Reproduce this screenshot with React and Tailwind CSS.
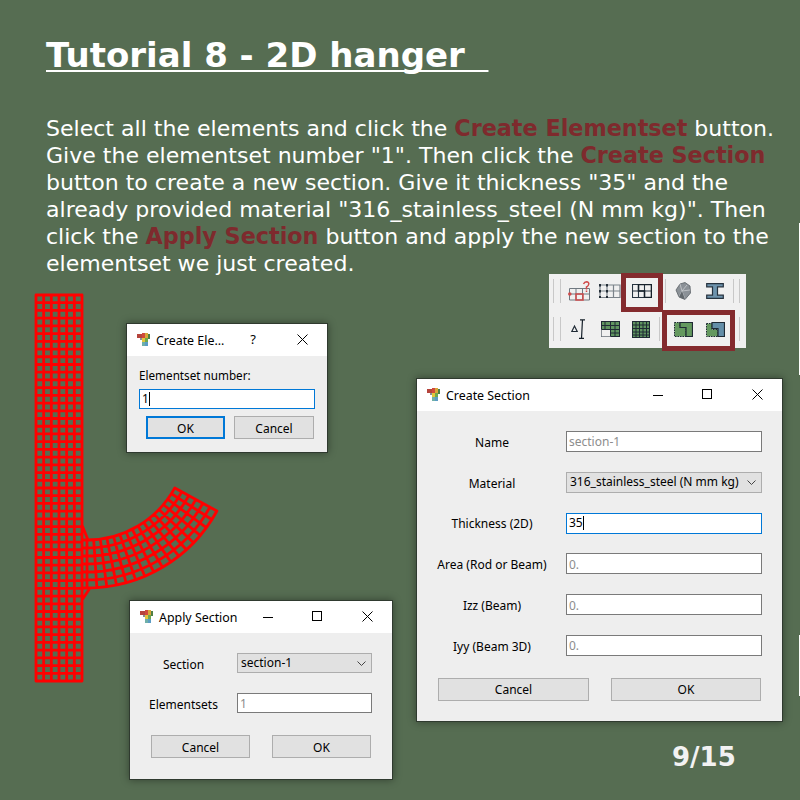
const accent = "text-[#7e2a2d] text-[22.3px]";

// strip + curved arm of the hanger, generated instead of typed out
const meshPath = () => {
  let d = "";
  const left = 36, right = 82, top = 295, bottom = 681;
  for (let c = 0; c <= 6; c++) {
    const x = left + ((right - left) * c) / 6;
    d += `M${x} ${top}V${bottom}`;
  }
  for (let r = 0; r <= 50; r++) {
    const y = top + ((bottom - top) * r) / 50;
    d += `M${left} ${y}H${right}`;
  }
  const cx = 87, cy = 440;
  const start = Math.PI / 2, end = 0.5;
  const pt = (rad, a) => `${(cx + rad * Math.cos(a)).toFixed(1)} ${(cy + rad * Math.sin(a)).toFixed(1)}`;
  for (let r = 0; r <= 6; r++) {
    const rad = 100 + r * 8;
    d += `M${pt(rad, start)}A${rad} ${rad} 0 0 0 ${pt(rad, end)}`;
    d += `M82 ${(cy + rad).toFixed(1)}H87`;
  }
  for (let s = 0; s <= 16; s++) {
    const a = start + ((end - start) * s) / 16;
    d += `M${pt(100, a)}L${pt(148, a)}`;
  }
  d += "M82 525L88 540M82 600L90 588";
  return d;
};

const AppIcon = () => (
  <svg width="13" height="14" viewBox="0 0 13 14" className="shrink-0">
    <rect x="0" y="1" width="5" height="4" fill="#b5443c" />
    <rect x="5" y="0" width="3" height="5" fill="#cf4a3c" />
    <rect x="8" y="0" width="3" height="5" fill="#d9a63a" />
    <rect x="11" y="1" width="2" height="5" fill="#4f7f45" />
    <rect x="3" y="5" width="2" height="2" fill="#8a8f96" />
    <rect x="5" y="5" width="3" height="4" fill="#e3c63c" />
    <rect x="8" y="5" width="3" height="4" fill="#6fa84f" />
    <rect x="5" y="9" width="3" height="4" fill="#6fb0a8" />
    <rect x="8" y="9" width="3" height="4" fill="#5b9cc4" />
  </svg>
);

const CloseGlyph = () => (
  <svg width="11" height="11" viewBox="0 0 11 11" className="mb-[2px] mr-[19px] shrink-0">
    <path d="M0.5 0.5L10.5 10.5M10.5 0.5L0.5 10.5" stroke="#000000" strokeWidth="1" />
  </svg>
);

const TitleBar = ({ title, help }) => (
  <div className="flex h-8 shrink-0 items-center bg-white pl-[10px] text-black">
    <AppIcon />
    <span className="ml-[6px] pt-[2px] text-[12.4px]">{title}</span>
    <div className="flex-1" />
    {help ? (
      <>
        <span className="mr-[41px] text-[13px]">?</span>
        <CloseGlyph />
      </>
    ) : (
      <>
        <div className="mr-[39px] h-px w-[10px] bg-black" />
        <div className="mb-[2px] mr-[40px] h-[10px] w-[10px] border border-black" />
        <CloseGlyph />
      </>
    )}
  </div>
);

const Btn = ({ children, className = "border border-[#adadad]" }) => (
  <div className={`flex h-[23px] w-full items-center justify-center bg-[#e1e1e1] pt-[2px] text-xs text-black ${className}`}>
    {children}
  </div>
);

const Field = ({ children, focus, muted }) => (
  <div
    className={`flex h-[21px] w-[196px] items-center border bg-white pl-[2px] text-xs ${
      focus ? "border-[#0078d7]" : "border-[#7a7a7a]"
    } ${muted ? "pt-[2px] text-[#8d8d8d]" : "text-black"}`}
  >
    {children}
    {focus && <span className="h-[14px] w-px bg-black" />}
  </div>
);

const Chevron = () => (
  <svg width="9" height="5" viewBox="0 0 9 5" className="mr-[5px] shrink-0">
    <path d="M0.5 0.5L4.5 4.5L8.5 0.5" fill="none" stroke="#444444" strokeWidth="1" />
  </svg>
);

const Combo = ({ children, className = "" }) => (
  <div className={`flex items-center justify-between border border-[#adadad] bg-[#e1e1e1] pl-[3px] text-xs text-black ${className}`}>
    <span>{children}</span>
    <Chevron />
  </div>
);

const Row = ({ label, children }) => (
  <div className="flex h-[20.8px] items-center">
    <span className="w-[149px] pl-[1px] pt-[3px] text-center text-xs text-black">{label}</span>
    {children}
  </div>
);

const Sep = ({ className }) => <div className={`h-6 w-px shrink-0 bg-[#c8c8c8] ${className}`} />;

const Toolbar = () => (
  <div className="absolute left-[549px] top-[274px] flex h-[74px] w-[197px] flex-col gap-[14px] bg-[#f0f0f0] pt-[5px]">
    <div className="flex h-6 items-center">
      <Sep className="ml-[4px]" />
      <Sep className="ml-[6px]" />
      <svg className="ml-[7px] shrink-0" width="22" height="20" viewBox="0 0 22 20">
        <path d="M1.5 7.5H21.5V19H1.5ZM8 7.5V19M14.5 7.5V19M1.5 13H21.5" fill="none" stroke="#6f7880" strokeWidth="1" />
        <rect x="8" y="13" width="7" height="6" fill="none" stroke="#cf4a4a" strokeWidth="1.5" />
        <circle cx="1.8" cy="13" r="1.8" fill="#cf4a4a" />
        <path d="M15.5 3Q16.5 0.8 18.5 0.8Q21 1 20.8 3Q20.5 5 18.5 6V8.5M18.5 9.5V11" fill="none" stroke="#cf4a4a" strokeWidth="1.5" />
      </svg>
      <svg className="ml-[9px] shrink-0" width="22" height="16" viewBox="0 0 22 16">
        <path d="M1 2H21V14.5H1ZM8 2V14.5M14.5 2V14.5M1 8H21" fill="none" stroke="#7b838a" strokeWidth="1.2" />
        <path d="M1 1V15M8 1V15" stroke="#16202a" strokeWidth="1.8" strokeDasharray="2.4 3.6" />
      </svg>
      <svg className="ml-[11px] shrink-0" width="20" height="14" viewBox="0 0 20 14">
        <path d="M0.5 0.5H19.5V13.5H0.5ZM6.5 0.5V13.5M12.5 0.5V13.5M0.5 7H19.5" fill="none" stroke="#26333f" strokeWidth="1.1" />
        <path d="M6.5 0.5H19.5V13.5H12.5V7H6.5Z" fill="none" stroke="#16202a" strokeWidth="1.5" />
      </svg>
      <Sep className="ml-[13px]" />
      <svg className="ml-[9px] shrink-0" width="16" height="18" viewBox="0 0 16 18">
        <path d="M1 8L5 2L10 0.5L15 4L15.5 11L10 17.5L4 15Z" fill="#8b9197" stroke="#5b6166" strokeWidth="0.8" />
        <path d="M5 2L7 9L4 15M7 9L10 17.5M7 9L12 3M7 9L15 8" fill="none" stroke="#c9cccf" strokeWidth="0.8" />
        <path d="M4 15L7 9L10 17.5Z" fill="#62686d" />
      </svg>
      <svg className="ml-[15px] shrink-0" width="18" height="16" viewBox="0 0 18 16">
        <path d="M0.7 0.7H17.3V3.8H11.5V12.2H17.3V15.3H0.7V12.2H6.5V3.8H0.7Z" fill="#6d93ad" stroke="#26333f" strokeWidth="1.2" />
      </svg>
      <Sep className="ml-[9px]" />
      <Sep className="ml-[5px]" />
    </div>
    <div className="flex h-6 items-center">
      <Sep className="ml-[4px]" />
      <Sep className="ml-[6px]" />
      <svg className="ml-[10px] shrink-0" width="15" height="20" viewBox="0 0 15 20">
        <path d="M0.8 12.5L3.5 7L6.2 12.5Z" fill="none" stroke="#1f2a35" strokeWidth="1.2" />
        <path d="M11.5 0.5L10.5 19.5M9 0.8H14M8 19.3H13" stroke="#16202a" strokeWidth="1.2" fill="none" />
      </svg>
      <svg className="ml-[15px] shrink-0" width="19" height="16" viewBox="0 0 19 16">
        <rect x="0.5" y="0.5" width="18" height="15" fill="#5f9460" stroke="#1f2a35" />
        <rect x="0.5" y="8.5" width="9" height="7" fill="#f0f0f0" stroke="#8a9098" strokeDasharray="1 1" />
        <path d="M4 0.5V8M9.5 0.5V15.5M14 0.5V15.5M0.5 4.5H18.5M0.5 8.5H18.5M9.5 12H18.5" stroke="#1f2a35" strokeWidth="1" fill="none" />
      </svg>
      <svg className="ml-[12px] shrink-0" width="18" height="17" viewBox="0 0 18 17">
        <rect x="0.5" y="0.5" width="17" height="16" fill="#5f9460" stroke="#1f2a35" />
        <path d="M4 0.5V16.5M7.5 0.5V16.5M11 0.5V16.5M14.5 0.5V16.5M0.5 4H17.5M0.5 7.5H17.5M0.5 11H17.5M0.5 14H17.5" stroke="#1f2a35" strokeWidth="1" fill="none" />
      </svg>
      <Sep className="ml-[9px]" />
      <svg className="ml-[14px] shrink-0" width="19" height="15" viewBox="0 0 19 15">
        <path d="M0.5 0.5H6V5.5H12V14.5H0.5Z" fill="#64995f" stroke="#1f2a35" strokeDasharray="1.5 1" />
        <path d="M6 0.5H18.5V14.5H12V5.5H6Z" fill="#64995f" stroke="#1f2a35" strokeWidth="1.2" />
      </svg>
      <svg className="ml-[13px] shrink-0" width="19" height="15" viewBox="0 0 19 15">
        <path d="M0.5 1.5H6V7.5H12V14.5H0.5Z" fill="#64995f" stroke="#1f2a35" strokeDasharray="1.5 1" />
        <path d="M6 0.5H18.5V14.5H12V6.5H6Z" fill="#648ea8" stroke="#1f2a35" strokeWidth="1.2" />
      </svg>
      <Sep className="ml-[14px]" />
    </div>
  </div>
);

export default function App() {
  return (
    <div className="relative h-[800px] w-[800px] overflow-hidden bg-[#566d52] font-['Noto_Sans',sans-serif]">
      <div className="pl-[46px] pt-[33px] font-['DejaVu_Sans',sans-serif] text-white">
        <h1 className="whitespace-pre text-[34px] font-bold leading-[44px] underline decoration-2 underline-offset-[3px] [text-decoration-skip-ink:none]">
          {"Tutorial 8 - 2D hanger  "}
        </h1>
        <p className="mt-[38px] w-[752px] text-[22.05px] leading-[27px]">
          Select all the elements and click the <b className={accent}>Create Elementset</b> button.
          <br />
          Give the elementset number "1". Then click the <b className={accent}>Create Section</b>
          <br />
          button to create a new section. Give it thickness "35" and the
          <br />
          already provided material "316_stainless_steel (N mm kg)". Then
          <br />
          click the <b className={accent}>Apply Section</b> button and apply the new section to the
          <br />
          elementset we just created.
        </p>
      </div>

      <svg className="absolute left-0 top-0" width="800" height="800" viewBox="0 0 800 800">
        <path d={meshPath()} fill="none" stroke="#ff0000" strokeWidth="2.8" strokeLinecap="round" />
      </svg>

      <Toolbar />
      <div className="absolute left-[621px] top-[273px] h-[39px] w-[42px] border-[5px] border-[#842b2e]" />
      <div className="absolute left-[662px] top-[310px] h-[41px] w-[73px] border-[5px] border-[#842b2e]" />

      {/* thin slivers of white on the right edge of the slide */}
      <div className="absolute left-[799px] top-[223px] h-[152px] w-px bg-white" />
      <div className="absolute left-[799px] top-[635px] h-[61px] w-px bg-white" />

      {/* Create Elementset */}
      <div className="absolute left-[126px] top-[323px] flex h-[130px] w-[202px] flex-col border border-[#2f3a2f] bg-[#eeeeee] shadow-[0_0_8px_rgba(0,0,0,0.4)]">
        <TitleBar title="Create Ele..." help />
        <div className="px-3 pt-[11px]">
          <div className="text-[11.7px] leading-[17px] text-black">Elementset number:</div>
          <div className="mt-[5px] flex h-[20px] w-[176px] items-center border border-[#0078d7] bg-white pl-[2px] text-xs text-black">
            1<span className="h-[14px] w-px bg-black" />
          </div>
          <div className="mt-[7px] flex gap-[9px] pl-[7px]">
            <div className="w-[79px]"><Btn className="border-2 border-[#0078d7]">OK</Btn></div>
            <div className="w-[80px]"><Btn>Cancel</Btn></div>
          </div>
        </div>
      </div>

      {/* Create Section */}
      <div className="absolute left-[416px] top-[378px] flex h-[344px] w-[367px] flex-col border border-[#2f3a2f] bg-[#eeeeee] shadow-[0_0_8px_rgba(0,0,0,0.4)]">
        <TitleBar title="Create Section" />
        <div className="flex flex-col gap-[20px] pt-[20px]">
          <Row label="Name"><Field muted>section-1</Field></Row>
          <Row label="Material"><Combo className="h-[21px] w-[196px]">316_stainless_steel (N mm kg)</Combo></Row>
          <Row label="Thickness (2D)"><Field focus>35</Field></Row>
          <Row label="Area (Rod or Beam)"><Field muted>0.</Field></Row>
          <Row label="Izz (Beam)"><Field muted>0.</Field></Row>
          <Row label="Iyy (Beam 3D)"><Field muted>0.</Field></Row>
        </div>
        <div className="mt-[22px] flex gap-[22px] pl-[21px]">
          <div className="w-[151px]"><Btn>Cancel</Btn></div>
          <div className="w-[150px]"><Btn>OK</Btn></div>
        </div>
      </div>

      {/* Apply Section */}
      <div className="absolute left-[129px] top-[600px] flex h-[180px] w-[264px] flex-col border border-[#2f3a2f] bg-[#eeeeee] shadow-[0_0_8px_rgba(0,0,0,0.4)]">
        <TitleBar title="Apply Section" />
        <div className="flex items-center pt-[20px]">
          <span className="w-[107px] pt-[3px] text-center text-xs text-black">Section</span>
          <Combo className="h-[20px] w-[135px]">section-1</Combo>
        </div>
        <div className="flex items-center pt-[20px]">
          <span className="w-[107px] pt-[3px] text-center text-xs text-black">Elementsets</span>
          <div className="flex h-[20px] w-[135px] items-center border border-[#7a7a7a] bg-white pl-[2px] pt-[2px] text-xs text-[#8d8d8d]">1</div>
        </div>
        <div className="mt-[22px] flex gap-[22px] pl-[21px]">
          <div className="w-[99px]"><Btn>Cancel</Btn></div>
          <div className="w-[99px]"><Btn>OK</Btn></div>
        </div>
      </div>

      <div className="absolute left-[672px] top-[740px] font-['DejaVu_Sans',sans-serif] text-[26px] font-bold leading-[34px] text-[#f2f2f2]">
        9/15
      </div>
    </div>
  );
}
